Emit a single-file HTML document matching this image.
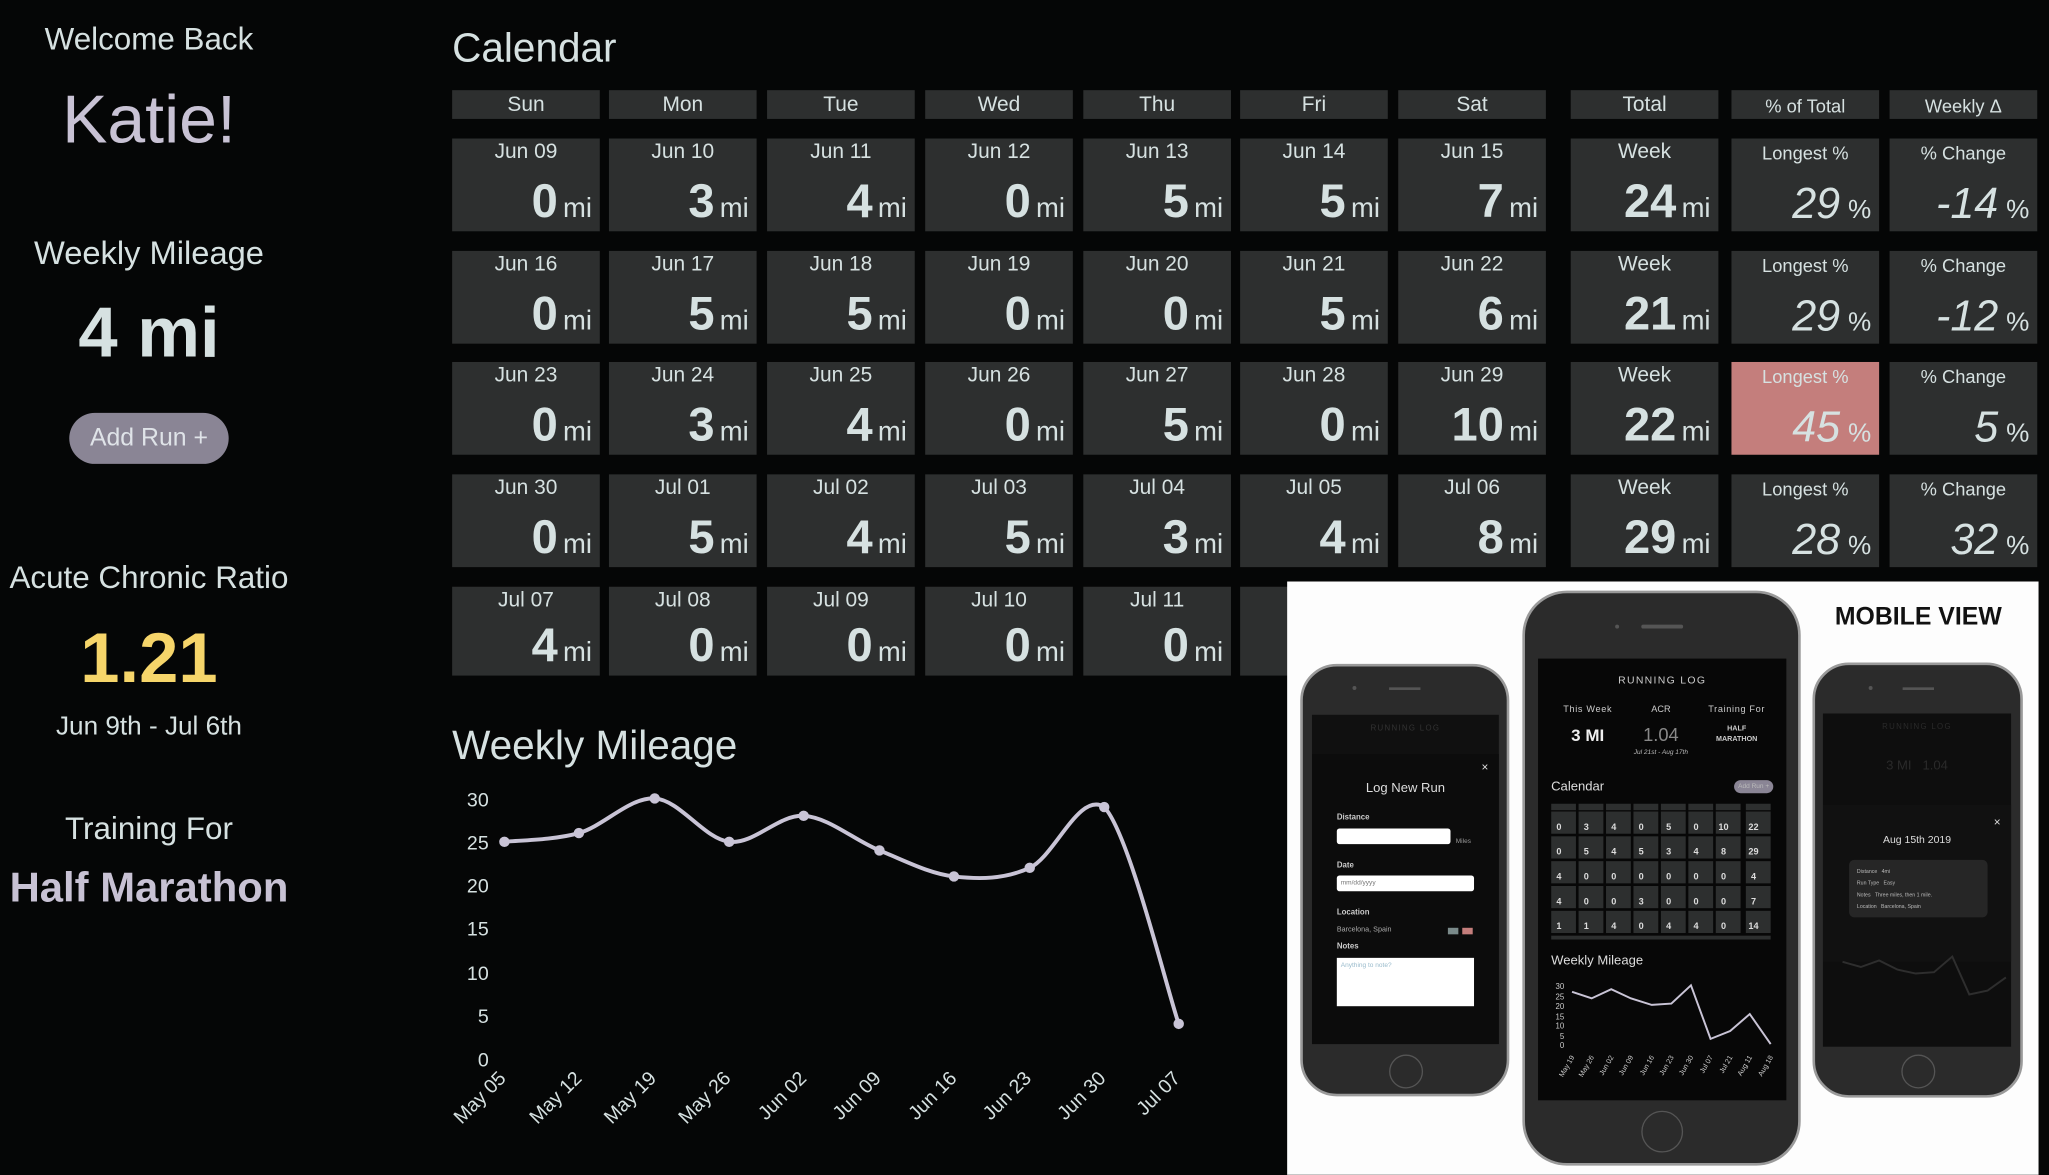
<!DOCTYPE html>
<html><head><meta charset="utf-8">
<style>
html,body{margin:0;padding:0;background:#050606;width:2049px;height:1175px;overflow:hidden}
#s{position:absolute;left:0;top:0;width:1568px;height:899px;transform:scale(1.30676);transform-origin:0 0;font-family:"Liberation Sans",sans-serif;color:#d6e1e1}
.a{position:absolute}
.ct{position:absolute;text-align:center;white-space:nowrap}
.h{position:absolute;height:22px;top:69px;width:113px;background:#2d2f2f;text-align:center;font-size:16px;line-height:24px;color:#d6e1e1}
.c{position:absolute;width:113px;height:71px;background:#2d2f2f}
.c .d{position:absolute;left:0;right:0;top:2px;text-align:center;font-size:16px;line-height:18px;color:#d6e1e1}
.c .n{position:absolute;right:6px;bottom:5px;white-space:nowrap;line-height:1}
.c .n b{font-size:36px;font-weight:bold;color:#d6e1e1}
.c .n span{font-size:21px;margin-left:4px;color:#d6e1e1}
.c .n i{font-size:33px;font-style:italic;color:#d6e1e1}
.c .n em{font-size:20px;font-style:normal;margin-left:6px}
.ph{position:absolute;background:#2b2b2b;border:2px solid #9a9a9a;border-radius:28px;box-sizing:border-box}
.sc{position:absolute;background:#0b0b0b;overflow:hidden}
.hb{position:absolute;border:1px solid #555;border-radius:50%}
</style></head><body><div id="s">

<div class="ct" style="left:0;width:228px;top:17px;font-size:24px">Welcome Back</div>
<div class="ct" style="left:0;width:228px;top:62px;font-size:52px;color:#c8c2d4">Katie!</div>
<div class="ct" style="left:0;width:228px;top:180px;font-size:25px">Weekly Mileage</div>
<div class="ct" style="left:0;width:228px;top:224px;font-size:54px;font-weight:bold">4 mi</div>
<div class="ct" style="left:53px;width:122px;top:316px;height:39px;line-height:40px;border-radius:20px;background:#8a8595;font-size:19px;color:#dfe3e8">Add Run +</div>
<div class="ct" style="left:0;width:228px;top:429px;font-size:24px">Acute Chronic Ratio</div>
<div class="ct" style="left:0;width:228px;top:473px;font-size:54px;font-weight:bold;color:#f6d56a">1.21</div>
<div class="ct" style="left:0;width:228px;top:545px;font-size:20px">Jun 9th - Jul 6th</div>
<div class="ct" style="left:0;width:228px;top:621px;font-size:24px">Training For</div>
<div class="ct" style="left:0;width:228px;top:661px;font-size:32px;font-weight:bold;color:#c8c2d4">Half Marathon</div>

<div class="a" style="left:346px;top:19px;font-size:31px">Calendar</div>

<div class="h" style="left:346px">Sun</div><div class="h" style="left:466px">Mon</div><div class="h" style="left:587px">Tue</div><div class="h" style="left:708px">Wed</div><div class="h" style="left:829px">Thu</div><div class="h" style="left:949px">Fri</div><div class="h" style="left:1070px">Sat</div><div class="h" style="left:1202px">Total</div><div class="h" style="left:1325px;font-size:14px">% of Total</div><div class="h" style="left:1446px;font-size:14px">Weekly Δ</div>

<div class="c" style="left:346px;top:106px"><div class="d">Jun 09</div><div class="n"><b>0</b><span>mi</span></div></div>
<div class="c" style="left:466px;top:106px"><div class="d">Jun 10</div><div class="n"><b>3</b><span>mi</span></div></div>
<div class="c" style="left:587px;top:106px"><div class="d">Jun 11</div><div class="n"><b>4</b><span>mi</span></div></div>
<div class="c" style="left:708px;top:106px"><div class="d">Jun 12</div><div class="n"><b>0</b><span>mi</span></div></div>
<div class="c" style="left:829px;top:106px"><div class="d">Jun 13</div><div class="n"><b>5</b><span>mi</span></div></div>
<div class="c" style="left:949px;top:106px"><div class="d">Jun 14</div><div class="n"><b>5</b><span>mi</span></div></div>
<div class="c" style="left:1070px;top:106px"><div class="d">Jun 15</div><div class="n"><b>7</b><span>mi</span></div></div>
<div class="c" style="left:1202px;top:106px"><div class="d">Week</div><div class="n"><b>24</b><span>mi</span></div></div>
<div class="c" style="left:1325px;top:106px"><div class="d" style="font-size:14px">Longest %</div><div class="n"><i>29</i><em>%</em></div></div>
<div class="c" style="left:1446px;top:106px"><div class="d" style="font-size:14px">% Change</div><div class="n"><i>-14</i><em>%</em></div></div>
<div class="c" style="left:346px;top:192px"><div class="d">Jun 16</div><div class="n"><b>0</b><span>mi</span></div></div>
<div class="c" style="left:466px;top:192px"><div class="d">Jun 17</div><div class="n"><b>5</b><span>mi</span></div></div>
<div class="c" style="left:587px;top:192px"><div class="d">Jun 18</div><div class="n"><b>5</b><span>mi</span></div></div>
<div class="c" style="left:708px;top:192px"><div class="d">Jun 19</div><div class="n"><b>0</b><span>mi</span></div></div>
<div class="c" style="left:829px;top:192px"><div class="d">Jun 20</div><div class="n"><b>0</b><span>mi</span></div></div>
<div class="c" style="left:949px;top:192px"><div class="d">Jun 21</div><div class="n"><b>5</b><span>mi</span></div></div>
<div class="c" style="left:1070px;top:192px"><div class="d">Jun 22</div><div class="n"><b>6</b><span>mi</span></div></div>
<div class="c" style="left:1202px;top:192px"><div class="d">Week</div><div class="n"><b>21</b><span>mi</span></div></div>
<div class="c" style="left:1325px;top:192px"><div class="d" style="font-size:14px">Longest %</div><div class="n"><i>29</i><em>%</em></div></div>
<div class="c" style="left:1446px;top:192px"><div class="d" style="font-size:14px">% Change</div><div class="n"><i>-12</i><em>%</em></div></div>
<div class="c" style="left:346px;top:277px"><div class="d">Jun 23</div><div class="n"><b>0</b><span>mi</span></div></div>
<div class="c" style="left:466px;top:277px"><div class="d">Jun 24</div><div class="n"><b>3</b><span>mi</span></div></div>
<div class="c" style="left:587px;top:277px"><div class="d">Jun 25</div><div class="n"><b>4</b><span>mi</span></div></div>
<div class="c" style="left:708px;top:277px"><div class="d">Jun 26</div><div class="n"><b>0</b><span>mi</span></div></div>
<div class="c" style="left:829px;top:277px"><div class="d">Jun 27</div><div class="n"><b>5</b><span>mi</span></div></div>
<div class="c" style="left:949px;top:277px"><div class="d">Jun 28</div><div class="n"><b>0</b><span>mi</span></div></div>
<div class="c" style="left:1070px;top:277px"><div class="d">Jun 29</div><div class="n"><b>10</b><span>mi</span></div></div>
<div class="c" style="left:1202px;top:277px"><div class="d">Week</div><div class="n"><b>22</b><span>mi</span></div></div>
<div class="c" style="left:1325px;top:277px;background:#c47e7c"><div class="d" style="font-size:14px">Longest %</div><div class="n"><i>45</i><em>%</em></div></div>
<div class="c" style="left:1446px;top:277px"><div class="d" style="font-size:14px">% Change</div><div class="n"><i>5</i><em>%</em></div></div>
<div class="c" style="left:346px;top:363px"><div class="d">Jun 30</div><div class="n"><b>0</b><span>mi</span></div></div>
<div class="c" style="left:466px;top:363px"><div class="d">Jul 01</div><div class="n"><b>5</b><span>mi</span></div></div>
<div class="c" style="left:587px;top:363px"><div class="d">Jul 02</div><div class="n"><b>4</b><span>mi</span></div></div>
<div class="c" style="left:708px;top:363px"><div class="d">Jul 03</div><div class="n"><b>5</b><span>mi</span></div></div>
<div class="c" style="left:829px;top:363px"><div class="d">Jul 04</div><div class="n"><b>3</b><span>mi</span></div></div>
<div class="c" style="left:949px;top:363px"><div class="d">Jul 05</div><div class="n"><b>4</b><span>mi</span></div></div>
<div class="c" style="left:1070px;top:363px"><div class="d">Jul 06</div><div class="n"><b>8</b><span>mi</span></div></div>
<div class="c" style="left:1202px;top:363px"><div class="d">Week</div><div class="n"><b>29</b><span>mi</span></div></div>
<div class="c" style="left:1325px;top:363px"><div class="d" style="font-size:14px">Longest %</div><div class="n"><i>28</i><em>%</em></div></div>
<div class="c" style="left:1446px;top:363px"><div class="d" style="font-size:14px">% Change</div><div class="n"><i>32</i><em>%</em></div></div>
<div class="c" style="left:346px;top:449px;height:68px"><div class="d">Jul 07</div><div class="n"><b>4</b><span>mi</span></div></div>
<div class="c" style="left:466px;top:449px;height:68px"><div class="d">Jul 08</div><div class="n"><b>0</b><span>mi</span></div></div>
<div class="c" style="left:587px;top:449px;height:68px"><div class="d">Jul 09</div><div class="n"><b>0</b><span>mi</span></div></div>
<div class="c" style="left:708px;top:449px;height:68px"><div class="d">Jul 10</div><div class="n"><b>0</b><span>mi</span></div></div>
<div class="c" style="left:829px;top:449px;height:68px"><div class="d">Jul 11</div><div class="n"><b>0</b><span>mi</span></div></div>
<div class="c" style="left:949px;top:449px;height:68px"></div>

<div class="a" style="left:346px;top:553px;font-size:31px">Weekly Mileage</div>

<svg class="a" style="left:0;top:0" width="1568" height="899">
<g font-family="Liberation Sans" font-size="15" fill="#d6e1e1" text-anchor="end">
<text x="374" y="617">30</text><text x="374" y="650">25</text><text x="374" y="683">20</text><text x="374" y="716">15</text><text x="374" y="750">10</text><text x="374" y="783">5</text><text x="374" y="816">0</text>
<text transform="translate(388,826) rotate(-45)">May 05</text>
<text transform="translate(446,826) rotate(-45)">May 12</text>
<text transform="translate(503,826) rotate(-45)">May 19</text>
<text transform="translate(560,826) rotate(-45)">May 26</text>
<text transform="translate(618,826) rotate(-45)">Jun 02</text>
<text transform="translate(675,826) rotate(-45)">Jun 09</text>
<text transform="translate(733,826) rotate(-45)">Jun 16</text>
<text transform="translate(790,826) rotate(-45)">Jun 23</text>
<text transform="translate(847,826) rotate(-45)">Jun 30</text>
<text transform="translate(904,826) rotate(-45)">Jul 07</text>
</g>
<path d="M386,644.2 C395.5,643.1 423.8,643 443,637.5 C462.2,632 481.8,609.9 501,611 C520.2,612.1 539,642 558,644.2 C577,646.4 595.8,623.2 615,624.3 C634.2,625.4 653.8,643.1 673,650.8 C692.2,658.5 710.8,668.5 730,670.7 C749.2,672.9 768.8,672.95 788,664.1 C807.2,655.2 826,605 845,617.6 C864,637.5 892.5,755.8 902,783.5" fill="none" stroke="#c9c4d6" stroke-width="3"/>
<g fill="#c9c4d6"><circle cx="386" cy="644.2" r="4"/><circle cx="443" cy="637.5" r="4"/><circle cx="501" cy="611" r="4"/><circle cx="558" cy="644.2" r="4"/><circle cx="615" cy="624.3" r="4"/><circle cx="673" cy="650.8" r="4"/><circle cx="730" cy="670.7" r="4"/><circle cx="788" cy="664.1" r="4"/><circle cx="845" cy="617.6" r="4"/><circle cx="902" cy="783.5" r="4"/></g>
</svg>

<div class="a" style="left:985px;top:445px;width:575px;height:454px;background:#fdfdfd"></div>
<div class="a" style="left:1380px;top:462px;width:176px;text-align:center;font-size:19px;font-weight:bold;color:#111">MOBILE VIEW</div>

<div class="ph" style="left:995px;top:508px;width:160px;height:331px"></div>
<div class="a" style="left:1035px;top:525px;width:3px;height:3px;border-radius:50%;background:#555"></div>
<div class="a" style="left:1063px;top:526px;width:24px;height:2px;background:#555"></div>
<div class="sc" style="left:1004px;top:547px;width:143px;height:252px;background:#101010">
 <div class="ct" style="left:0;right:0;top:8px;font-size:6px;color:#333;letter-spacing:1px">RUNNING LOG</div>
 <div class="a" style="left:0;right:0;top:30px;bottom:0;background:#0c0c0c"></div>
 <div class="a" style="right:8px;top:35px;font-size:9px;color:#ddd">×</div>
 <div class="ct" style="left:0;right:0;top:51px;font-size:10px;color:#ddd">Log New Run</div>
 <div class="a" style="left:19px;top:76px;font-size:6px;color:#ccc;font-weight:bold">Distance</div>
 <div class="a" style="left:19px;top:87px;width:87px;height:12px;background:#fff;border-radius:2px"></div>
 <div class="a" style="left:110px;top:94px;font-size:5px;color:#999">Miles</div>
 <div class="a" style="left:19px;top:113px;font-size:6px;color:#ccc;font-weight:bold">Date</div>
 <div class="a" style="left:19px;top:123px;width:105px;height:12px;background:#fff;border-radius:2px;font-size:5px;color:#777;line-height:12px;text-indent:3px">mm/dd/yyyy</div>
 <div class="a" style="left:19px;top:149px;font-size:6px;color:#ccc;font-weight:bold">Location</div>
 <div class="a" style="left:19px;top:162px;font-size:5.5px;color:#aaa">Barcelona, Spain</div>
 <div class="a" style="left:104px;top:163px;width:8px;height:5px;background:#7a8a8a"></div>
 <div class="a" style="left:115px;top:163px;width:8px;height:5px;background:#c47e7c"></div>
 <div class="a" style="left:19px;top:175px;font-size:6px;color:#ccc;font-weight:bold">Notes</div>
 <div class="a" style="left:19px;top:186px;width:105px;height:37px;background:#fff;font-size:5px;color:#9bc;padding:3px;box-sizing:border-box">Anything to note?</div>
</div>
<div class="hb" style="left:1063px;top:807px;width:24px;height:24px"></div>

<div class="ph" style="left:1165px;top:452px;width:213px;height:440px;border-radius:34px"></div>
<div class="a" style="left:1236px;top:478px;width:3px;height:3px;border-radius:50%;background:#555"></div>
<div class="a" style="left:1256px;top:478px;width:32px;height:3px;background:#555;border-radius:2px"></div>
<div class="sc" style="left:1177px;top:504px;width:190px;height:338px;background:#070707">
 <div class="ct" style="left:0;right:0;top:12px;font-size:8px;letter-spacing:1px;color:#ccc">RUNNING LOG</div>
 <div class="ct" style="left:10px;width:56px;top:36px;font-size:7px;color:#ccc;letter-spacing:.5px">This Week</div>
 <div class="ct" style="left:66px;width:56px;top:36px;font-size:7px;color:#ccc">ACR</div>
 <div class="ct" style="left:122px;width:60px;top:36px;font-size:7px;color:#ccc;letter-spacing:.5px">Training For</div>
 <div class="ct" style="left:10px;width:56px;top:51px;font-size:13px;color:#eee;font-weight:bold">3 MI</div>
 <div class="ct" style="left:66px;width:56px;top:50px;font-size:14px;color:#888">1.04</div>
 <div class="ct" style="left:122px;width:60px;top:50px;font-size:5.5px;color:#ccc;font-weight:bold;line-height:8px">HALF<br>MARATHON</div>
 <div class="ct" style="left:66px;width:56px;top:69px;font-size:5px;color:#bbb;font-style:italic">Jul 21st - Aug 17th</div>
 <div class="a" style="left:10px;top:93px;font-size:10px;color:#ddd">Calendar</div>
 <div class="a" style="left:150px;top:93px;width:30px;height:10px;border-radius:5px;background:#8a8595;font-size:5px;color:#bbb;text-align:center;line-height:10px">Add Run +</div>
 <svg class="a" style="left:10px;top:111px" width="172" height="104">
  <g fill="#2d2f2f">
   <rect x="0" y="0" width="19" height="5"/><rect x="21" y="0" width="19" height="5"/><rect x="42" y="0" width="19" height="5"/><rect x="63" y="0" width="19" height="5"/><rect x="84" y="0" width="19" height="5"/><rect x="105" y="0" width="19" height="5"/><rect x="126" y="0" width="19" height="5"/><rect x="149" y="0" width="19" height="5"/>
   <rect x="0" y="6" width="19" height="17"/><rect x="21" y="6" width="19" height="17"/><rect x="42" y="6" width="19" height="17"/><rect x="63" y="6" width="19" height="17"/><rect x="84" y="6" width="19" height="17"/><rect x="105" y="6" width="19" height="17"/><rect x="126" y="6" width="19" height="17"/><rect x="149" y="6" width="19" height="17"/>
   <rect x="0" y="25" width="19" height="17"/><rect x="21" y="25" width="19" height="17"/><rect x="42" y="25" width="19" height="17"/><rect x="63" y="25" width="19" height="17"/><rect x="84" y="25" width="19" height="17"/><rect x="105" y="25" width="19" height="17"/><rect x="126" y="25" width="19" height="17"/><rect x="149" y="25" width="19" height="17"/>
   <rect x="0" y="44" width="19" height="17"/><rect x="21" y="44" width="19" height="17"/><rect x="42" y="44" width="19" height="17"/><rect x="63" y="44" width="19" height="17"/><rect x="84" y="44" width="19" height="17"/><rect x="105" y="44" width="19" height="17"/><rect x="126" y="44" width="19" height="17"/><rect x="149" y="44" width="19" height="17"/>
   <rect x="0" y="63" width="19" height="17"/><rect x="21" y="63" width="19" height="17"/><rect x="42" y="63" width="19" height="17"/><rect x="63" y="63" width="19" height="17"/><rect x="84" y="63" width="19" height="17"/><rect x="105" y="63" width="19" height="17"/><rect x="126" y="63" width="19" height="17"/><rect x="149" y="63" width="19" height="17"/>
   <rect x="0" y="82" width="19" height="17"/><rect x="21" y="82" width="19" height="17"/><rect x="42" y="82" width="19" height="17"/><rect x="63" y="82" width="19" height="17"/><rect x="84" y="82" width="19" height="17"/><rect x="105" y="82" width="19" height="17"/><rect x="126" y="82" width="19" height="17"/><rect x="149" y="82" width="19" height="17"/>
   <rect x="0" y="101" width="168" height="3"/>
  </g>
  <g font-family="Liberation Sans" font-size="7" font-weight="bold" fill="#ddd">
   <text x="4" y="20">0</text><text x="25" y="20">3</text><text x="46" y="20">4</text><text x="67" y="20">0</text><text x="88" y="20">5</text><text x="109" y="20">0</text><text x="128" y="20">10</text><text x="151" y="20">22</text>
   <text x="4" y="39">0</text><text x="25" y="39">5</text><text x="46" y="39">4</text><text x="67" y="39">5</text><text x="88" y="39">3</text><text x="109" y="39">4</text><text x="130" y="39">8</text><text x="151" y="39">29</text>
   <text x="4" y="58">4</text><text x="25" y="58">0</text><text x="46" y="58">0</text><text x="67" y="58">0</text><text x="88" y="58">0</text><text x="109" y="58">0</text><text x="130" y="58">0</text><text x="153" y="58">4</text>
   <text x="4" y="77">4</text><text x="25" y="77">0</text><text x="46" y="77">0</text><text x="67" y="77">3</text><text x="88" y="77">0</text><text x="109" y="77">0</text><text x="130" y="77">0</text><text x="153" y="77">7</text>
   <text x="4" y="96">1</text><text x="25" y="96">1</text><text x="46" y="96">4</text><text x="67" y="96">0</text><text x="88" y="96">4</text><text x="109" y="96">4</text><text x="130" y="96">0</text><text x="151" y="96">14</text>
  </g>
 </svg>
 <div class="a" style="left:10px;top:226px;font-size:10px;color:#ddd">Weekly Mileage</div>
 <svg class="a" style="left:0;top:245px" width="190" height="93">
  <g font-family="Liberation Sans" font-size="6" fill="#ccc" text-anchor="end">
   <text x="20" y="8">30</text><text x="20" y="16">25</text><text x="20" y="23">20</text><text x="20" y="31">15</text><text x="20" y="38">10</text><text x="20" y="46">5</text><text x="20" y="53">0</text>
  </g>
  <polyline points="26,10 41,15 56,8 71,15 87,20 102,19 117,5 132,46 147,40 162,27 178,50" fill="none" stroke="#c9c4d6" stroke-width="1.5"/>
  <g font-family="Liberation Sans" font-size="5.5" fill="#ccc" text-anchor="end">
   <text transform="translate(28,60) rotate(-60)">May 19</text><text transform="translate(43,60) rotate(-60)">May 26</text><text transform="translate(58,60) rotate(-60)">Jun 02</text><text transform="translate(73,60) rotate(-60)">Jun 09</text><text transform="translate(89,60) rotate(-60)">Jun 16</text><text transform="translate(104,60) rotate(-60)">Jun 23</text><text transform="translate(119,60) rotate(-60)">Jun 30</text><text transform="translate(134,60) rotate(-60)">Jul 07</text><text transform="translate(149,60) rotate(-60)">Jul 21</text><text transform="translate(164,60) rotate(-60)">Aug 11</text><text transform="translate(180,60) rotate(-60)">Aug 18</text>
  </g>
 </svg>
</div>
<div class="hb" style="left:1256px;top:850px;width:30px;height:30px"></div>

<div class="ph" style="left:1387px;top:507px;width:161px;height:333px"></div>
<div class="a" style="left:1430px;top:525px;width:3px;height:3px;border-radius:50%;background:#555"></div>
<div class="a" style="left:1456px;top:526px;width:24px;height:2px;background:#555"></div>
<div class="sc" style="left:1395px;top:546px;width:144px;height:255px;background:#0e0e0e">
 <div class="ct" style="left:0;right:0;top:8px;font-size:6px;color:#2a2a2a;letter-spacing:1px">RUNNING LOG</div>
 <div class="ct" style="left:0;right:0;top:35px;font-size:10px;color:#2a2a2a">3 MI &nbsp; 1.04</div>
 <div class="a" style="left:0;right:0;top:70px;height:120px;background:#111"></div>
 <div class="a" style="right:8px;top:78px;font-size:9px;color:#ddd">×</div>
 <div class="ct" style="left:0;right:0;top:92px;font-size:8px;color:#ddd">Aug 15th 2019</div>
 <div class="a" style="left:20px;top:112px;width:106px;height:44px;background:#262626;border-radius:4px;font-size:4px;color:#bbb;line-height:9px;padding:4px 6px;box-sizing:border-box">Distance &nbsp; 4mi<br>Run Type &nbsp; Easy<br>Notes &nbsp; Three miles, then 1 mile.<br>Location &nbsp; Barcelona, Spain</div>
 <svg class="a" style="left:0;top:180px" width="144" height="75"><polyline points="15,10 29,14 43,9 57,16 71,19 85,18 99,6 112,35 126,32 140,22" fill="none" stroke="#2e2e2e" stroke-width="1.5"/></svg>
</div>
<div class="hb" style="left:1455px;top:807px;width:24px;height:24px"></div>

</div></body></html>
